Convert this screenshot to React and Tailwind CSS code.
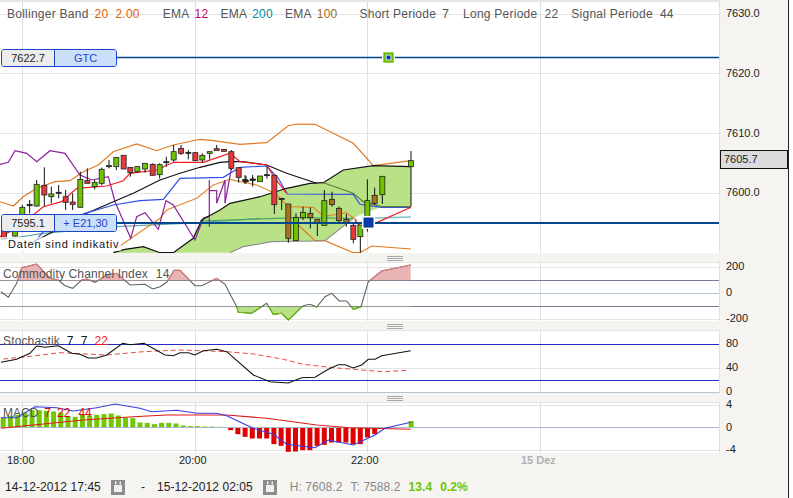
const pts = (list, ox = 0, oy = 0) =>
  list.map(([x, y]) => `${(ox + x / 3).toFixed(1)},${(oy + y / 3).toFixed(1)}`).join(' ')

const VGRID = [22.5, 195.5, 367.5, 540.5]

// candle: [x, wickTop, wickBottom, bodyTop, bodyBottom, colour]  (y in page px)
const G = '#6fc400'
const R = '#e8383a'
const B = '#a8741c'
const K = '#111111'
const z2 = (x, wt, wb, bt, bb, c) => [x / 3, 130 + wt / 3, 130 + wb / 3, 130 + bt / 3, 130 + bb / 3, c]
const z3 = (x, wt, wb, bt, bb, c) => [200 + x / 3, 110 + wt / 3, 110 + wb / 3, 110 + bt / 3, 110 + bb / 3, c]
const candles = [
  z2(12, 290, 325, 300, 325, R),
  z2(45, 285, 320, 295, 318, G),
  z2(67, 225, 290, 232, 280, G),
  z2(89, 210, 250, 223, 227, K),
  z2(110, 150, 230, 163, 228, G),
  z2(133, 112, 228, 166, 195, R),
  z2(154, 170, 220, 192, 200, G),
  z2(176, 165, 205, 187, 190, K),
  z2(197, 180, 240, 200, 217, R),
  z2(218, 190, 240, 216, 223, R),
  z2(241, 125, 232, 148, 232, G),
  z2(262, 115, 160, 152, 160, R),
  z2(284, 150, 178, 157, 170, G),
  z2(305, 113, 165, 118, 160, G),
  z2(327, 90, 115, 107, 110, K),
  z2(349, 82, 120, 82, 110, G),
  z2(371, 76, 117, 76, 117, R),
  z2(391, 112, 140, 112, 128, R),
  z2(412, 108, 128, 110, 125, G),
  z2(435, 100, 128, 100, 117, G),
  z2(458, 100, 136, 103, 136, R),
  z2(479, 100, 146, 104, 134, G),
  z2(499, 80, 110, 95, 98, K),
  z2(521, 45, 95, 65, 90, G),
  z2(543, 45, 75, 55, 70, R),
  z2(565, 60, 88, 67, 70, K),
  z2(586, 68, 92, 68, 92, R),
  z2(607, 70, 98, 76, 90, G),
  z2(629, 65, 88, 65, 70, G),
  z2(650, 45, 62, 56, 62, R),
  z2(672, 58, 64, 58, 64, R),
  z2(694, 60, 120, 65, 115, R),
  z2(716, 113, 158, 113, 142, R),
  z2(738, 138, 160, 152, 155, K),
  z2(758, 140, 160, 148, 151, K),
  z3(135, 195, 222, 209, 212, K),
  z3(158, 195, 230, 207, 210, K),
  z3(180, 198, 215, 198, 215, G),
  z3(201, 170, 206, 194, 197, K),
  z3(223, 196, 312, 196, 284, R),
  z3(245, 265, 300, 265, 267, K),
  z3(265, 282, 398, 282, 385, B),
  z3(288, 310, 392, 322, 392, G),
  z3(309, 290, 330, 307, 323, G),
  z3(331, 292, 355, 310, 323, B),
  z3(352, 328, 378, 328, 338, B),
  z3(373, 240, 346, 272, 346, G),
  z3(396, 245, 290, 268, 284, B),
  z3(417, 290, 340, 295, 332, B),
  z3(439, 312, 350, 328, 340, B),
  z3(460, 340, 400, 346, 388, R),
  z3(481, 345, 428, 345, 380, G),
  z3(502, 208, 365, 272, 320, G),
  z3(524, 233, 285, 256, 280, B),
  z3(547, 199, 282, 199, 254, G),
  z3(633, 123, 170, 152, 170, G),
]

const upperBand = pts([[0, 215], [40, 228], [70, 200], [110, 175], [165, 155], [210, 152], [250, 125], [295, 105], [340, 65], [410, 42], [470, 62], [520, 45], [590, 30]], 0, 130) + ' ' +
  pts([[0, 88], [40, 92], [120, 103], [200, 98], [265, 47], [290, 42], [345, 43], [400, 70], [460, 100], [520, 167], [633, 152]], 200, 110)
const midBand = pts([[350, 355], [415, 310], [480, 265], [500, 240], [590, 205]], 0, 130) + ' ' +
  pts([[40, 225], [90, 208], [170, 225], [225, 250], [265, 290], [340, 292], [372, 320], [438, 308], [470, 330]], 200, 110)
const lowerBand = pts([[295, 345], [345, 392], [375, 392], [460, 428], [480, 428], [515, 408], [633, 417]], 200, 110)
const black = pts([[100, 335], [180, 295], [260, 250], [340, 215], [400, 190], [480, 150], [540, 130], [600, 112], [660, 97]], 0, 130) + ' ' +
  pts([[90, 155], [130, 155], [200, 165], [260, 190], [350, 220]], 200, 110)
const blue = pts([[100, 340], [130, 305], [255, 250], [340, 225], [420, 212], [490, 208], [540, 145], [670, 142], [720, 112]], 0, 130) + ' ' +
  pts([[200, 168], [235, 205], [262, 252], [460, 253], [480, 283], [545, 292], [633, 292]], 200, 110)
const red = pts([[0, 320], [50, 295], [130, 230], [185, 215], [230, 175], [320, 168], [370, 152], [390, 130], [470, 120], [520, 97], [610, 97], [690, 70], [720, 95]], 0, 130) + ' ' +
  pts([[200, 165], [225, 205], [260, 250]], 200, 110)
const redEnd = pts([[465, 330], [480, 348], [525, 340], [633, 292]], 200, 110)
const purple = pts([[0, 103], [25, 97], [45, 62], [80, 70], [110, 95], [150, 62], [195, 70], [240, 135], [275, 150], [325, 140], [345, 215], [392, 325], [410, 260], [435, 248], [475, 298], [498, 212], [520, 225], [585, 330], [610, 265], [628, 258], [628, 150], [628, 290], [628, 182], [650, 182], [650, 220], [675, 150], [675, 220], [695, 110]], 0, 130)
const teal = pts([[0, 330], [130, 310], [350, 290], [600, 278], [780, 265]], 0, 130)
const tealMid = pts([[0, 333], [300, 323], [460, 325]], 200, 110)
const tealEnd = pts([[500, 325], [633, 321]], 200, 110)
const cloudTop = pts([[340, 368], [375, 358], [430, 350], [480, 368], [520, 368], [580, 325], [605, 270], [660, 240]], 0, 130) + ' ' +
  pts([[90, 280], [180, 260], [260, 235], [330, 220], [370, 218], [430, 180], [520, 167], [633, 170]], 200, 110)
const cloudBottom = pts([[633, 290], [545, 290], [480, 315], [460, 325], [375, 392], [350, 393], [215, 395], [130, 410], [90, 428]], 200, 110)
const cloudLow = pts([[460, 325], [375, 392], [350, 393], [215, 395], [130, 410], [90, 428]], 200, 110)
const olive = pts([[370, 218], [460, 250], [490, 275], [545, 290], [633, 290]], 200, 110)

const cci = [[3, 110], [25, 127], [50, 85], [65, 38], [110, 27], [150, 70], [175, 75], [195, 92], [218, 100], [245, 75], [262, 72], [285, 82], [320, 60], [350, 55], [390, 90], [435, 88], [458, 102], [480, 95], [500, 82], [522, 46], [540, 46], [585, 92], [605, 92], [650, 70], [675, 88], [710, 155], [715, 172], [755, 175], [800, 145], [820, 178], [845, 175], [865, 195], [910, 152], [930, 148], [950, 156], [975, 125], [995, 115], [1018, 138], [1040, 138], [1060, 163], [1083, 155], [1105, 80], [1145, 48], [1232, 30]]
const stochK = [[3, 97], [50, 88], [90, 70], [110, 48], [135, 52], [175, 47], [215, 70], [240, 73], [265, 84], [290, 84], [320, 75], [368, 40], [390, 44], [432, 40], [495, 75], [520, 77], [540, 68], [565, 68], [585, 75], [610, 62], [650, 58], [680, 65], [760, 135], [810, 155], [865, 159], [905, 143], [945, 142], [985, 118], [1015, 104], [1035, 104], [1060, 114], [1085, 105], [1105, 88], [1125, 88], [1145, 77], [1232, 62]]
const stochD = [[10, 87], [100, 78], [180, 68], [320, 75], [430, 65], [540, 60], [680, 65], [760, 72], [850, 88], [910, 103], [1000, 113], [1060, 118], [1150, 125], [1225, 121]]
const macdLine = [[3, 68], [50, 68], [105, 35], [170, 38], [220, 48], [290, 38], [345, 27], [420, 40], [455, 50], [530, 46], [590, 55], [650, 55], [680, 62], [760, 100], [820, 118], [860, 148], [945, 158], [985, 135], [1060, 150], [1125, 120], [1155, 100], [1232, 82]]
const macdSignal = [[3, 100], [250, 75], [400, 65], [500, 60], [680, 60], [800, 70], [950, 90], [1050, 98], [1232, 103]]
const greenBars = [30, 35, 38, 45, 52, 52, 50, 48, 45, 32, 32, 38, 36, 38, 40, 42, 36, 30, 28, 15, 14, 10, 14, 14, 12, 6, 4, 4, 3, 3, 2]
const redBars = [8, 20, 28, 33, 33, 33, 50, 55, 73, 72, 68, 68, 55, 52, 45, 45, 45, 50, 50, 30, 20]

function VLines({ top, bottom }) {
  return VGRID.map((x) => <line key={x} x1={x} x2={x} y1={top} y2={bottom} stroke="#e0e0e0" />)
}

function HLine({ y, color = '#e4e4e4' }) {
  return <line x1="0" x2="720" y1={y} y2={y} stroke={color} />
}

function Grip() {
  return (
    <div className="flex h-[9px] w-[720px] justify-center pl-[70px]">
      <div className="mt-[3px] h-[5px] w-[16px] border-y border-[#a8a8a8] bg-[linear-gradient(#f5f4f0_40%,#a8a8a8_40%,#a8a8a8_60%,#f5f4f0_60%)]" />
    </div>
  )
}

function Axis({ labels, className = '' }) {
  return (
    <div className={`relative flex-1 text-[11px] text-[#222] ${className}`}>
      {labels.map(([text, y]) => (
        <span key={text} className="absolute left-[6px] leading-none" style={{ top: y }}>
          {text}
        </span>
      ))}
    </div>
  )
}

function Tag({ price, label, top }) {
  return (
    <div
      className="absolute left-[1px] flex h-[18px] w-[116px] overflow-hidden rounded-[3px] border border-[#1c46c8] text-[11px] leading-[16px]"
      style={{ top }}
    >
      <span className="w-[53px] border-r border-[#1c46c8] bg-[#ececec] text-center text-[#222]">{price}</span>
      <span className="flex-1 bg-[#cce0fc] text-center text-[#1c46c8]">{label}</span>
    </div>
  )
}

function MainChart() {
  return (
    <svg viewBox="0 2 720 251" width="720" height="251" className="absolute inset-0">
      <HLine y={14.5} />
      <HLine y={73.5} />
      <HLine y={133.5} />
      <HLine y={193.5} />
      <VLines top={2} bottom={253} />
      <polygon points={`${cloudTop} ${cloudBottom}`} fill="#b9e186" />
      <polyline points={teal} fill="none" stroke="#5fa8a8" strokeWidth="1.2" />
      <polyline points={tealMid} fill="none" stroke="#4aa860" strokeWidth="1.2" />
      <polyline points={tealEnd} fill="none" stroke="#7cc0c8" strokeWidth="1.5" />
      <polyline points={upperBand} fill="none" stroke="#e07a20" strokeWidth="1.2" />
      <polyline points={midBand} fill="none" stroke="#e08a30" strokeWidth="1.2" />
      <polyline points={lowerBand} fill="none" stroke="#e07a20" strokeWidth="1.2" />
      <polyline points={purple} fill="none" stroke="#8a1f9c" strokeWidth="1.2" />
      <polyline points={black} fill="none" stroke="#111" strokeWidth="1.2" />
      <polyline points={blue} fill="none" stroke="#2f4fe8" strokeWidth="1.2" />
      <polyline points={red} fill="none" stroke="#f01c20" strokeWidth="1.2" />
      <polyline points={redEnd} fill="none" stroke="#f01c20" strokeWidth="1.2" />
      <polyline points={cloudTop} fill="none" stroke="#111" strokeWidth="1.2" />
      <polyline points={cloudLow} fill="none" stroke="#909090" strokeWidth="1.2" />
      <polyline points={olive} fill="none" stroke="#5c7a3a" strokeWidth="1.2" />
      <line x1="411" x2="411" y1="166.5" y2="206.5" stroke="#111" />
      {candles.map(([x, wt, wb, bt, bb, c]) => (
        <g key={x}>
          <line x1={x} x2={x} y1={wt} y2={wb} stroke="#111" />
          <rect
            x={x - 2.5}
            y={bt}
            width="5"
            height={Math.max(bb - bt, 1)}
            fill={c}
            stroke="#222"
            strokeWidth="0.8"
          />
        </g>
      ))}
      <line x1="117" x2="720" y1="57.5" y2="57.5" stroke="#00468c" strokeWidth="1.6" />
      <line x1="117" x2="720" y1="223" y2="223" stroke="#00468c" strokeWidth="2" />
      <rect x="382" y="52" width="13" height="12" fill="#fff" />
      <rect x="384.5" y="53.5" width="8" height="8" fill="#fff" stroke="#66c000" strokeWidth="2.4" />
      <rect x="386.5" y="55.5" width="4" height="4" fill="#0a3ab0" />
      <rect x="362" y="216" width="13" height="13" fill="#fff" />
      <rect x="364" y="218" width="9" height="9" fill="#0a3ab0" stroke="#003a80" />
    </svg>
  )
}

function CciChart() {
  const line = pts(cci, 0, 255)
  const closed = `${pts([[3, 76]], 0, 255)} ${line} ${pts([[1232, 76]], 0, 255)}`
  return (
    <svg viewBox="0 262 720 59" width="720" height="59" className="absolute inset-0">
      <defs>
        <clipPath id="cci-up"><rect x="0" y="262" width="720" height="18.5" /></clipPath>
        <clipPath id="cci-down"><rect x="0" y="306.5" width="720" height="15" /></clipPath>
      </defs>
      <HLine y={262.5} />
      <HLine y={267.5} />
      <HLine y={319.5} />
      <VLines top={262} bottom={321} />
      <HLine y={280.5} color="#7a7a90" />
      <HLine y={293.5} color="#b0c4d4" />
      <HLine y={306.5} color="#7a7a90" />
      <polygon points={closed} fill="#e8b4b4" clipPath="url(#cci-up)" />
      <polygon points={`${pts([[3, 155]], 0, 255)} ${line} ${pts([[1232, 155]], 0, 255)}`} fill="#b9e186" clipPath="url(#cci-down)" />
      <polyline points={line} fill="none" stroke="#606060" strokeWidth="1.1" />
      <polyline points={line} fill="none" stroke="#e08080" strokeWidth="1.1" clipPath="url(#cci-up)" />
      <polyline points={line} fill="none" stroke="#66c000" strokeWidth="1.1" clipPath="url(#cci-down)" />
    </svg>
  )
}

function StochChart() {
  return (
    <svg viewBox="0 330 720 63" width="720" height="63" className="absolute inset-0">
      <HLine y={330.5} />
      <HLine y={368.5} />
      <VLines top={330} bottom={393} />
      <HLine y={344.5} color="#2a2ac8" />
      <HLine y={380.5} color="#2a2ac8" />
      <HLine y={392.5} color="#b8c4d0" />
      <polyline points={pts(stochD, 0, 330)} fill="none" stroke="#f04848" strokeWidth="1" strokeDasharray="5 3" />
      <polyline points={pts(stochK, 0, 330)} fill="none" stroke="#111" strokeWidth="1.1" />
    </svg>
  )
}

function MacdChart() {
  return (
    <svg viewBox="0 402 720 51" width="720" height="51" className="absolute inset-0">
      <HLine y={402.5} />
      <HLine y={405.5} />
      <HLine y={450.5} />
      <VLines top={402} bottom={453} />
      {greenBars.map((h, i) => (
        <rect key={i} x={0.7 + i * 7.2} y={427.5 - h / 3} width="5" height={h / 3} fill="#72c800" />
      ))}
      {redBars.map((h, i) => (
        <rect key={i} x={230.7 - 2.5 + i * 7.2} y="427.5" width="5" height={h / 3} fill="#e00000" />
      ))}
      <rect x="408.7" y="421" width="5" height="6.5" fill="#72c800" />
      <HLine y={427.5} color="#a8b8c8" />
      <polyline points={pts(macdSignal, 0, 395)} fill="none" stroke="#e01818" strokeWidth="1.1" />
      <polyline points={pts(macdLine, 0, 395)} fill="none" stroke="#3a3ae0" strokeWidth="1.1" />
    </svg>
  )
}

function CalendarIcon() {
  return (
    <svg width="14" height="15" viewBox="0 0 14 15">
      <rect width="14" height="15" fill="#8c8c8c" />
      <rect x="3" y="5" width="8" height="7" fill="#f0f0f0" />
      <rect x="4" y="1.5" width="1.5" height="3" fill="#f0f0f0" />
      <rect x="8.5" y="1.5" width="1.5" height="3" fill="#f0f0f0" />
    </svg>
  )
}

export default function App() {
  return (
    <div className="h-[498px] w-[793px] overflow-hidden bg-white font-['Liberation_Sans',sans-serif]">
      <div className="flex h-full w-[789px] flex-col border-r border-[#222] bg-[#f5f4f0]">
        <div className="h-[2px] w-[720px] bg-[#e6e6e6]" />
        <div className="flex h-[251px]">
          <div className="relative w-[720px] overflow-hidden border-r border-[#e0e0e0] bg-white">
            <MainChart />
            <div className="absolute left-[7px] top-[4px] flex text-[12px] leading-[16px] tracking-[0.25px] text-[#555]">
              <span>Bollinger Band</span>
              <span className="ml-[6px] text-[#e06000]">20</span>
              <span className="ml-[7px] text-[#e06000]">2.00</span>
              <span className="ml-[23px]">EMA</span>
              <span className="ml-[5px] text-[#c0006a]">12</span>
              <span className="ml-[12px]">EMA</span>
              <span className="ml-[5px] text-[#008a9a]">200</span>
              <span className="ml-[12px]">EMA</span>
              <span className="ml-[5px] text-[#a06a10]">100</span>
              <span className="ml-[22px]">Short Periode</span>
              <span className="ml-[6px]">7</span>
              <span className="ml-[14px]">Long Periode</span>
              <span className="ml-[7px]">22</span>
              <span className="ml-[13px]">Signal Periode</span>
              <span className="ml-[7px]">44</span>
            </div>
            <Tag price="7622.7" label="GTC" top={47} />
            <Tag price="7595.1" label="+ E21,30" top={212} />
            <div className="absolute bottom-[2px] left-0 bg-white/70 pl-[8px] pr-[2px] text-[11px] leading-[14px] tracking-[0.8px] text-[#111]">
              Daten sind indikativ
            </div>
          </div>
          <div className="relative flex-1">
            <Axis labels={[['7630.0', 6], ['7620.0', 66], ['7610.0', 126], ['7600.0', 185]]} className="h-full" />
            <div className="absolute left-0 top-[148px] h-[19px] w-[68px] border border-[#111] bg-[#dcdcdc] pl-[3px] text-[11px] leading-[17px] text-[#222]">
              7605.7
            </div>
          </div>
        </div>
        <Grip />
        <div className="flex h-[59px]">
          <div className="relative w-[720px] overflow-hidden border-r border-[#e0e0e0] bg-white">
            <CciChart />
            <div className="absolute left-[3px] top-[4px] text-[12px] leading-[16px] tracking-[0.15px] text-[#555]">
              Commodity Channel Index<span className="ml-[8px]">14</span>
            </div>
          </div>
          <Axis labels={[['200', -1], ['0', 25], ['-200', 51]]} />
        </div>
        <Grip />
        <div className="flex h-[63px]">
          <div className="relative w-[720px] overflow-hidden border-r border-[#e0e0e0] bg-white">
            <StochChart />
            <div className="absolute left-[3px] top-[3px] text-[12px] leading-[16px] tracking-[0.15px] text-[#555]">
              Stochastik<span className="ml-[7px] text-[#111]">7</span>
              <span className="ml-[7px] text-[#111]">7</span>
              <span className="ml-[7px] text-[#f01c20]">22</span>
            </div>
          </div>
          <Axis labels={[['80', 8], ['40', 32], ['0', 56]]} />
        </div>
        <Grip />
        <div className="flex h-[51px]">
          <div className="relative w-[720px] overflow-hidden border-r border-[#e0e0e0] bg-white">
            <MacdChart />
            <div className="absolute left-[3px] top-[3px] text-[12px] leading-[16px] text-[#555]">
              MACD<span className="ml-[6px] text-[#e00000]">7</span>
              <span className="ml-[6px] text-[#e00000]">22</span>
              <span className="ml-[8px] text-[#e00000]">44</span>
            </div>
          </div>
          <Axis labels={[['4', -3], ['0', 20], ['-4', 42]]} />
        </div>
        <div className="flex h-[14px] pt-[1px] text-[11px] leading-[12px] text-[#222]">
          <span className="ml-[7px] w-[172px]">18:00</span>
          <span className="w-[172px]">20:00</span>
          <span className="w-[170px]">22:00</span>
          <span className="font-bold text-[#b0b0b0]">15 Dez</span>
        </div>
        <div className="mt-[12px] flex items-center text-[12px] leading-[16px] tracking-[0.07px] text-[#222]">
          <span className="ml-[5px]">14-12-2012 17:45</span>
          <span className="ml-[10px]"><CalendarIcon /></span>
          <span className="ml-[16px]">-</span>
          <span className="ml-[12px]">15-12-2012 02:05</span>
          <span className="ml-[10px]"><CalendarIcon /></span>
          <span className="ml-[13px] text-[#888]">H: 7608.2</span>
          <span className="ml-[8px] text-[#888]">T: 7588.2</span>
          <span className="ml-[8px] font-bold text-[#6fc400]">13.4</span>
          <span className="ml-[8px] font-bold text-[#6fc400]">0.2%</span>
        </div>
      </div>
    </div>
  )
}
